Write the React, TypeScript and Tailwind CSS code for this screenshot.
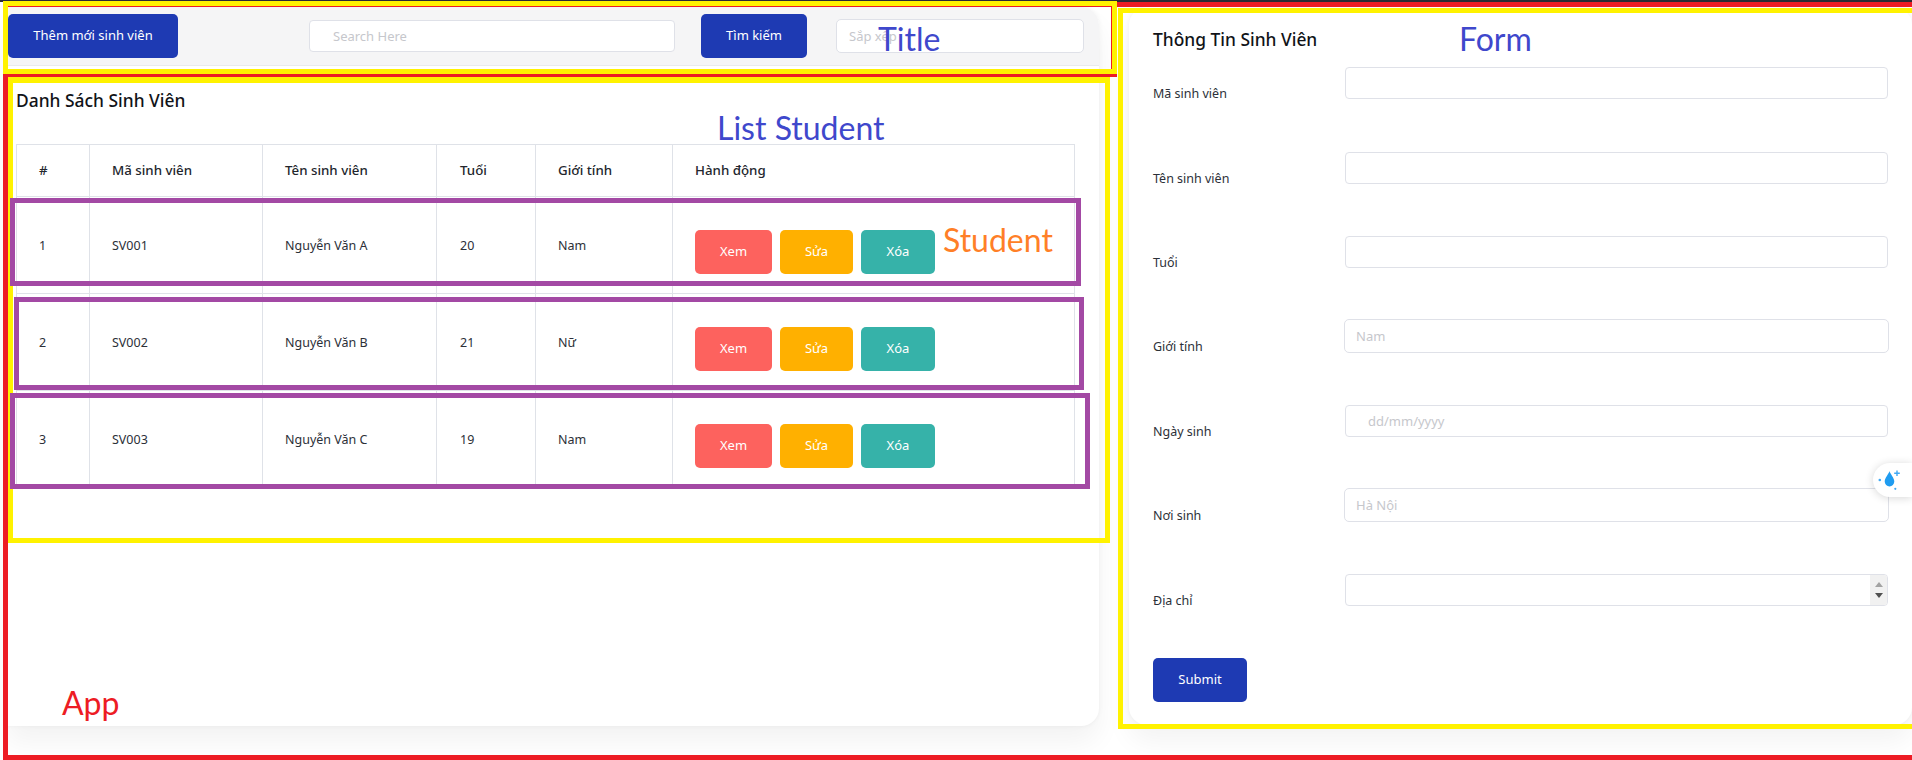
import React from "react";

const students = [
  { id: 1, code: "SV001", name: "Nguyễn Văn A", age: 20, gender: "Nam" },
  { id: 2, code: "SV002", name: "Nguyễn Văn B", age: 21, gender: "Nữ" },
  { id: 3, code: "SV003", name: "Nguyễn Văn C", age: 19, gender: "Nam" },
];

const inputBase =
  "h-[32px] w-[543px] rounded-[4px] border border-[#dfe1e8] bg-white text-[13px] outline-none placeholder:text-[#c6c7cc]";
const inputWide =
  "-ml-[1px] h-[34px] w-[545px] rounded-[5px] border border-[#dfe1e8] bg-white pl-[11px] text-[13px] outline-none placeholder:text-[#c6c7cc]";

const DropIcon = () => (
  <svg width="24" height="24" viewBox="0 0 24 24" fill="#1f9cf0">
    <path d="M11.5 3c.6 3 4.800 6.500 4.800 10.600a4.800 4.800 0 0 1-9.600 0c0-4.100 4.200-7.600 4.800-10.600z" />
    <path d="M18.300 2.500h1.400v2.100h2.100v1.400h-2.100v2.100h-1.400v-2.100h-2.100v-1.400h2.100z" fill="#3fa9f5" />
    <circle cx="1.800" cy="12" r="1.300" fill="#3fa9f5" />
    <circle cx="17.300" cy="20.800" r="1.100" fill="#3fa9f5" />
  </svg>
);

const ActionButton = ({ label, className }: { label: string; className: string }) => (
  <button className={`h-[44px] rounded-[5px] text-[13px] text-white ${className}`}>{label}</button>
);

const Title = () => (
  <div className="flex h-[59px] items-center rounded-tr-[18px] border-b border-[#e9eaec] bg-[#f5f5f6] pl-[1px]">
    <button className="h-[44px] w-[170px] rounded-[5px] bg-[#1e3ab3] text-[13px] text-white">
      Thêm mới sinh viên
    </button>
    <input
      placeholder="Search Here"
      className="ml-[131px] h-[32px] w-[366px] rounded-[4px] border border-[#dfe1e8] bg-white pl-[23px] text-[13px] outline-none placeholder:text-[#c6c7cc]"
    />
    <button className="ml-[26px] h-[44px] w-[106px] rounded-[5px] bg-[#1e3ab3] text-[13px] text-white">
      Tìm kiếm
    </button>
    <input
      placeholder="Sắp xếp"
      className="ml-[29px] h-[34px] w-[248px] rounded-[5px] border border-[#dfe1e8] bg-white pl-[12px] text-[13px] outline-none placeholder:text-[#c6c7cc]"
    />
  </div>
);

const ListStudent = () => (
  <div className="pl-[9px]">
    <h2 className="mt-[23px] h-[23px] text-[17.400px] leading-[22px] font-medium text-[#111318]">Danh Sách Sinh Viên</h2>
    <table className="mt-[32px] w-[1058px] table-fixed border-collapse text-[12.500px] text-[#2c3038]">
      <colgroup>
        <col className="w-[73px]" />
        <col className="w-[173px]" />
        <col className="w-[174px]" />
        <col className="w-[99px]" />
        <col className="w-[137px]" />
        <col className="w-[402px]" />
      </colgroup>
      <thead>
        <tr className="h-[52px] text-left text-[13.300px] font-medium text-[#23262d]">
          <th className="border border-[#dfe2e8] pl-[22px] font-medium">#</th>
          <th className="border border-[#dfe2e8] pl-[22px] font-medium">Mã sinh viên</th>
          <th className="border border-[#dfe2e8] pl-[22px] font-medium">Tên sinh viên</th>
          <th className="border border-[#dfe2e8] pl-[23px] font-medium">Tuổi</th>
          <th className="border border-[#dfe2e8] pl-[22px] font-medium">Giới tính</th>
          <th className="border border-[#dfe2e8] pl-[22px] font-medium">Hành động</th>
        </tr>
      </thead>
      <tbody>
        {students.map((s) => (
          <tr key={s.id} className="h-[97px]">
            <td className="border border-[#dfe2e8] pt-[3px] pl-[22px]">{s.id}</td>
            <td className="border border-[#dfe2e8] pt-[3px] pl-[22px]">{s.code}</td>
            <td className="border border-[#dfe2e8] pt-[3px] pl-[22px]">{s.name}</td>
            <td className="border border-[#dfe2e8] pt-[3px] pl-[23px]">{s.age}</td>
            <td className="border border-[#dfe2e8] pt-[3px] pl-[22px]">{s.gender}</td>
            <td className="border border-[#dfe2e8] pt-[13px] pl-[22px]">
              <div className="flex gap-[8px]">
                <ActionButton label="Xem" className="w-[77px] bg-[#fd625e]" />
                <ActionButton label="Sửa" className="w-[73px] bg-[#ffb000]" />
                <ActionButton label="Xóa" className="w-[74px] bg-[#36b2a9]" />
              </div>
            </td>
          </tr>
        ))}
      </tbody>
    </table>
  </div>
);

const Field = ({
  label,
  height,
  top = "pt-[17px]",
  children,
}: {
  label: string;
  height: string;
  top?: string;
  children: React.ReactNode;
}) => (
  <div className={`flex ${height}`}>
    <label className={`w-[192px] text-[12.500px] leading-[20px] text-[#2c3038] ${top}`}>{label}</label>
    {children}
  </div>
);

const StudentForm = () => (
  <form className="pl-[24px]">
    <h2 className="mt-[21px] h-[39px] text-[17.400px] leading-[22px] font-medium text-[#111318]">Thông Tin Sinh Viên</h2>
    <Field label="Mã sinh viên" height="h-[85px]">
      <input className={inputBase} />
    </Field>
    <Field label="Tên sinh viên" height="h-[84px]">
      <input className={inputBase} />
    </Field>
    <Field label="Tuổi" height="h-[83px]">
      <input className={inputBase} />
    </Field>
    <Field label="Giới tính" height="h-[86px]" top="pt-[18px]">
      <input placeholder="Nam" className={inputWide} />
    </Field>
    <Field label="Ngày sinh" height="h-[83px]">
      <input placeholder="dd/mm/yyyy" className={`${inputBase} pl-[22px]`} />
    </Field>
    <Field label="Nơi sinh" height="h-[86px]" top="pt-[18px]">
      <input placeholder="Hà Nội" className={inputWide} />
    </Field>
    <Field label="Địa chỉ" height="h-[84px]">
      <div className="flex h-[32px] w-[543px] overflow-hidden rounded-[4px] border border-[#dfe1e8] bg-white">
        <textarea className="flex-1 resize-none outline-none" />
        <div className="flex w-[17px] flex-col items-center justify-between bg-[#f1f1f1] py-[7px]">
          <svg width="8" height="5" viewBox="0 0 8 5">
            <path d="M4 0l4 5H0z" fill="#a3a3a3" />
          </svg>
          <svg width="8" height="5" viewBox="0 0 8 5">
            <path d="M0 0h8L4 5z" fill="#505050" />
          </svg>
        </div>
      </div>
    </Field>
    <button className="h-[44px] w-[94px] rounded-[5px] bg-[#1e3ab3] text-[13px] text-white">Submit</button>
  </form>
);

// the coloured boxes and words someone drew on top of the screenshot
const Annotations = () => (
  <>
    <div className="absolute top-0 left-0 h-[2px] w-full bg-[#2b2b33]" />
    <div className="absolute top-[2px] left-[3px] h-[758px] w-[1925px] border-[5px] border-[#ed1c24]" />
    <div className="absolute top-[1px] left-[3px] h-[73px] w-[1114px] border-[5px] border-[#fff200]" />
    <div className="absolute top-[6px] left-[8px] h-[63px] w-[1104px] border-t border-r border-[#ed1c24]" />
    <div className="absolute top-[74px] left-[3px] h-[3px] w-[1114px] bg-[#ed1c24]" />
    <div className="absolute top-[77px] left-[8px] h-[466px] w-[1102px] border-[5px] border-t-[6px] border-[#fff200]" />
    <div className="absolute top-[8px] left-[1118px] h-[721px] w-[810px] border-[5px] border-[#fff200]" />
    <div className="absolute top-[198px] left-[10px] h-[88px] w-[1071px] border-[5px] border-[#a349a4]" />
    <div className="absolute top-[297px] left-[14px] h-[93px] w-[1070px] border-[5px] border-[#a349a4]" />
    <div className="absolute top-[393px] left-[10px] h-[96px] w-[1080px] border-[5px] border-[#a349a4]" />
    <span className="absolute top-[19px] left-[878px] text-[32px] leading-[40px] text-[#3f48cc]">Title</span>
    <span className="absolute top-[19px] left-[1459px] text-[32px] leading-[40px] text-[#3f48cc]">Form</span>
    <span className="absolute top-[108px] left-[717px] text-[32px] leading-[40px] text-[#3f48cc]">List Student</span>
    <span className="absolute top-[220px] left-[943px] text-[32px] leading-[40px] text-[#ff7f27]">Student</span>
    <span className="absolute top-[683px] left-[62px] text-[32px] leading-[40px] text-[#ed1c24]">App</span>
  </>
);

export default function App() {
  return (
    <div className="relative flex h-[760px] w-[1912px] overflow-hidden bg-white font-['Noto_Sans',sans-serif]">
      <div className="mt-[7px] ml-[7px] h-[719px] w-[1092px] rounded-r-[18px] bg-white shadow-[0_16px_27px_rgba(0,0,0,0.05),0_0_5px_rgba(0,0,0,0.05)]">
        <Title />
        <ListStudent />
      </div>
      <div className="mt-[7px] ml-[30px] h-[718px] w-[783px] rounded-[18px] bg-white shadow-[0_16px_27px_rgba(0,0,0,0.05),0_0_5px_rgba(0,0,0,0.05)]">
        <StudentForm />
      </div>
      <div className="absolute top-[463px] right-0 flex h-[34px] w-[39px] items-center rounded-l-full bg-white pl-[5px] shadow-[0_1px_8px_rgba(0,0,0,0.16)]">
        <DropIcon />
      </div>
      <div className="font-['Lato',sans-serif]">
        <Annotations />
      </div>
    </div>
  );
}
